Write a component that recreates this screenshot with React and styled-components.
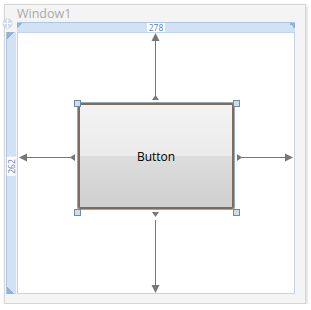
import React from "react";
import styled, { createGlobalStyle } from "styled-components";

const GlobalStyle = createGlobalStyle`
  html, body {
    margin: 0;
    background: #ffffff;
    font-family: "Open Sans", "Noto Sans", sans-serif;
  }
`;

const handles = [
  { x: 56, y: 67 },
  { x: 215, y: 67 },
  { x: 56, y: 176 },
  { x: 215, y: 176 },
];

const App = () => {
  return (
    <>
      <GlobalStyle />
      <Frame>
        <MoveIcon width="11" height="11" viewBox="0 0 11 11">
          <circle cx="5.5" cy="5.5" r="5" fill="#c9d9ec" />
          <path d="M5.5 1.5 L5.5 9.5 M1.5 5.5 L9.5 5.5" stroke="#ffffff" strokeWidth="1.2" />
          <path d="M5.5 1 L4 3 L7 3 Z M5.5 10 L4 8 L7 8 Z M1 5.5 L3 4 L3 7 Z M10 5.5 L8 4 L8 7 Z" fill="#ffffff" />
        </MoveIcon>
        <Title>Window1</Title>
        <Stage>
          <Corner />
          <TopRuler>
            <RulerLabel>278</RulerLabel>
          </TopRuler>
          <LeftRuler>
            <VerticalLabel>262</VerticalLabel>
          </LeftRuler>
          <Content>
            <Adorners width="278" height="262" viewBox="0 0 278 262">
              <g stroke="#777777" strokeWidth="1">
                <line x1="138.5" y1="6" x2="138.5" y2="64" />
                <line x1="138.5" y1="188" x2="138.5" y2="256" />
                <line x1="7" y1="125.5" x2="54" y2="125.5" />
                <line x1="224" y1="125.5" x2="270" y2="125.5" />
              </g>
              <g fill="#777777">
                <path d="M138.5 1 L134.5 9 L142.5 9 Z" />
                <path d="M138.5 63 L135 68 L142 68 Z" />
                <path d="M138.5 261 L134.5 253 L142.5 253 Z" />
                <path d="M138.5 185 L135 180 L142 180 Z" />
                <path d="M2 125.5 L10 121.5 L10 129.5 Z" />
                <path d="M53 125.5 L58 122 L58 129 Z" />
                <path d="M276 125.5 L268 121.5 L268 129.5 Z" />
                <path d="M225 125.5 L220 122 L220 129 Z" />
              </g>
            </Adorners>
            <DesignButton>Button</DesignButton>
            {handles.map((h, i) => (
              <Handle key={i} style={{ left: h.x, top: h.y }} />
            ))}
          </Content>
        </Stage>
      </Frame>
    </>
  );
};

const Frame = styled.div`
  position: relative;
  margin: 4px 0 0 4px;
  width: 300px;
  height: 298px;
  background: #f4f4f4;
  border: 1px solid #d6d6d6;
  box-shadow: 1px 1px 3px rgba(0, 0, 0, 0.18);
`;

const MoveIcon = styled.svg`
  position: absolute;
  left: -3px;
  top: 13px;
`;

const Title = styled.div`
  height: 17px;
  padding-left: 12px;
  font-size: 12.5px;
  line-height: 17px;
  color: #a9a9a9;
`;

const Stage = styled.div`
  display: grid;
  grid-template-columns: 12px 278px;
  grid-template-rows: 10px 262px;
`;

const Corner = styled.div``;

const TopRuler = styled.div`
  position: relative;
  display: flex;
  justify-content: center;
  align-items: stretch;
  background: #d3e2f3;
  border-top: 1px solid #a9c5e8;
  box-sizing: border-box;
  &::before,
  &::after {
    content: "";
    position: absolute;
    top: 0;
    width: 6px;
    height: 6px;
  }
  &::before {
    left: 0;
    background: linear-gradient(135deg, #8fb3df 50%, transparent 50%);
  }
  &::after {
    right: 0;
    background: linear-gradient(225deg, #8fb3df 50%, transparent 50%);
  }
`;

const RulerLabel = styled.span`
  background: #ffffff;
  padding: 0 2px;
  font-size: 8.5px;
  line-height: 9px;
  color: #5b82b5;
`;

const LeftRuler = styled.div`
  position: relative;
  margin-left: 1px;
  width: 10px;
  display: flex;
  align-items: center;
  justify-content: center;
  background: #d3e2f3;
  border-left: 1px solid #a9c5e8;
  box-sizing: border-box;
  &::before,
  &::after {
    content: "";
    position: absolute;
    left: 0;
    width: 7px;
    height: 7px;
  }
  &::before {
    top: 0;
    background: linear-gradient(135deg, #8fb3df 50%, transparent 50%);
  }
  &::after {
    bottom: 0;
    background: linear-gradient(45deg, #8fb3df 50%, transparent 50%);
  }
`;

const VerticalLabel = styled.span`
  transform: rotate(-90deg);
  background: #ffffff;
  padding: 0 2px;
  font-size: 8.5px;
  line-height: 9px;
  color: #5b82b5;
  margin-top: 6px;
`;

const Content = styled.div`
  position: relative;
  background: #ffffff;
  border: 1px solid #c6d3e4;
  box-sizing: border-box;
`;

const Adorners = styled.svg`
  position: absolute;
  left: -1px;
  top: -1px;
`;

const DesignButton = styled.div`
  position: absolute;
  left: 60px;
  top: 70px;
  width: 156px;
  height: 106px;
  box-sizing: border-box;
  display: flex;
  align-items: center;
  justify-content: center;
  border: 2px solid #7f6c59;
  border-radius: 2px;
  box-shadow: 0 0 0 1px #98a8b4;
  background: linear-gradient(
    to bottom,
    #f3f3f3 0%,
    #ebebeb 50%,
    #dddddd 50%,
    #cfcfcf 100%
  );
  font-size: 12px;
  color: #000000;
`;

const Handle = styled.div`
  position: absolute;
  width: 7px;
  height: 7px;
  box-sizing: border-box;
  background: #cfdcea;
  border: 1px solid #6d8aa6;
`;

export default App;
